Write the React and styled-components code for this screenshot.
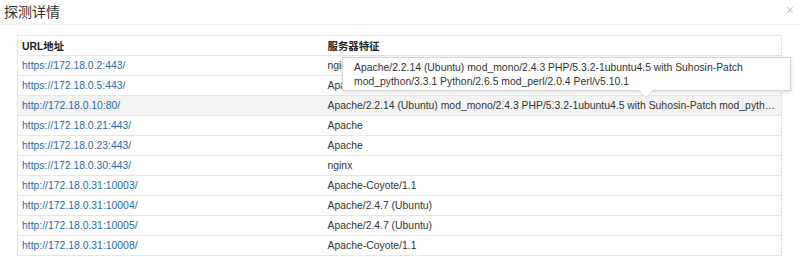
import React from "react";
import styled, { createGlobalStyle } from "styled-components";

const GlobalStyle = createGlobalStyle`
  html, body {
    margin: 0;
    padding: 0;
    background: #ffffff;
  }
  body {
    font-family: "Liberation Sans", "Noto Sans CJK SC", sans-serif;
    color: #333333;
  }
`;

const rows = [
  { url: "https://172.18.0.2:443/", server: "nginx" },
  { url: "https://172.18.0.5:443/", server: "Apache" },
  {
    url: "http://172.18.0.10:80/",
    server:
      "Apache/2.2.14 (Ubuntu) mod_mono/2.4.3 PHP/5.3.2-1ubuntu4.5 with Suhosin-Patch mod_python/3.3.1 Python/2.6.5 mod_perl/2.0.4 Perl/v5.10.1",
    active: true,
  },
  { url: "https://172.18.0.21:443/", server: "Apache" },
  { url: "https://172.18.0.23:443/", server: "Apache" },
  { url: "https://172.18.0.30:443/", server: "nginx" },
  { url: "http://172.18.0.31:10003/", server: "Apache-Coyote/1.1" },
  { url: "http://172.18.0.31:10004/", server: "Apache/2.4.7 (Ubuntu)" },
  { url: "http://172.18.0.31:10005/", server: "Apache/2.4.7 (Ubuntu)" },
  { url: "http://172.18.0.31:10008/", server: "Apache-Coyote/1.1" },
];

const Dialog = () => {
  return (
    <DialogStyled>
      <Header>
        <span className="title">探测详情</span>
        <span className="close">×</span>
      </Header>
      <Body>
        <Table>
          <colgroup>
            <col style={{ width: 306 }} />
            <col />
          </colgroup>
          <thead>
            <tr>
              <Th>URL地址</Th>
              <Th>服务器特征</Th>
            </tr>
          </thead>
          <tbody>
            {rows.map((r) => (
              <Row key={r.url} $active={r.active}>
                <Td>
                  <Link href="#">{r.url}</Link>
                </Td>
                <Td>{r.server}</Td>
              </Row>
            ))}
          </tbody>
        </Table>
        <Tooltip>
          Apache/2.2.14 (Ubuntu) mod_mono/2.4.3 PHP/5.3.2-1ubuntu4.5 with Suhosin-Patch
          <br />
          mod_python/3.3.1 Python/2.6.5 mod_perl/2.0.4 Perl/v5.10.1
        </Tooltip>
      </Body>
    </DialogStyled>
  );
};

const DialogStyled = styled.div`
  width: 800px;
  height: 257px;
  background: #ffffff;
  overflow: hidden;
`;

const Header = styled.div`
  display: flex;
  justify-content: space-between;
  align-items: center;
  height: 25px;
  padding: 0 6px 0 4px;
  border-bottom: 1px solid #f0f0f0;
  box-sizing: border-box;
  .title {
    font-size: 14px;
    color: #333333;
    margin-top: -2px;
  }
  .close {
    font-size: 14px;
    color: #cccccc;
    margin-top: -4px;
  }
`;

const Body = styled.div`
  position: relative;
  padding: 10px 18px 0 17px;
`;

const Table = styled.table`
  width: 100%;
  table-layout: fixed;
  border-collapse: collapse;
  border: 1px solid #e6e6e6;
  font-size: 10.4px;
`;

const Th = styled.th`
  height: 19px;
  padding: 0 4px;
  text-align: left;
  font-weight: bold;
  font-size: 10.4px;
  color: #222222;
  border-bottom: 1px solid #e6e6e6;
`;

const Row = styled.tr`
  background: ${(p) => (p.$active ? "#f3f3f3" : "#ffffff")};
`;

const Td = styled.td`
  height: 19px;
  padding: 0 4px;
  border-bottom: 1px solid #e6e6e6;
  white-space: nowrap;
  overflow: hidden;
  text-overflow: ellipsis;
  color: #333333;
`;

const Link = styled.a`
  color: #2a6aa8;
  text-decoration: none;
`;

const Tooltip = styled.div`
  position: absolute;
  left: 342px;
  top: 32px;
  width: 449px;
  height: 34px;
  box-sizing: border-box;
  padding: 3px 11px;
  background: #ffffff;
  border: 1px solid #d6d6d6;
  box-shadow: 0 1px 4px rgba(0, 0, 0, 0.15);
  font-size: 10.4px;
  line-height: 14px;
  color: #333333;
  white-space: nowrap;
  &::before,
  &::after {
    content: "";
    position: absolute;
    left: 296px;
    border-style: solid;
    border-color: transparent;
  }
  &::before {
    bottom: -8px;
    margin-left: -1px;
    border-width: 8px 8px 0 8px;
    border-top-color: #d6d6d6;
  }
  &::after {
    bottom: -7px;
    border-width: 7px 7px 0 7px;
    border-top-color: #ffffff;
  }
`;

export default function App() {
  return (
    <>
      <GlobalStyle />
      <Dialog />
    </>
  );
}
